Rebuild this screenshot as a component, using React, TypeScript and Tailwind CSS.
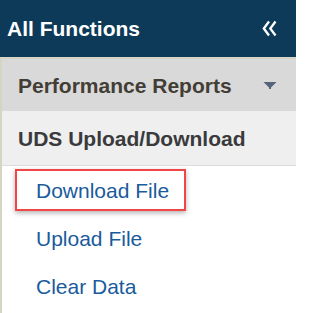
export default function App() {
  const font = { fontFamily: '"Liberation Sans", Arial, sans-serif' };
  return (
    <div className="w-[296px] h-[313px] bg-white overflow-hidden" style={font}>
      <div className="h-[57px] bg-[#0e3a59] flex items-center justify-between pl-[7px] pr-[19px]">
        <span className="text-white font-bold text-[21px] leading-none">All Functions</span>
        <svg width="15" height="17" viewBox="0 0 15 17" fill="none">
          <path d="M7 1.5 L1.8 8.5 L7 15.5" stroke="white" strokeWidth="2.3" strokeLinejoin="miter" />
          <path d="M13.5 1.5 L8.3 8.5 L13.5 15.5" stroke="white" strokeWidth="2.3" strokeLinejoin="miter" />
        </svg>
      </div>
      <div className="border-t-2 border-l-2 border-[#d6d4c5] h-[256px]">
        <div className="h-[52px] bg-[#d9d9d9] flex items-center justify-between pl-[16px] pr-[19px]">
          <span className="font-bold text-[21px] leading-none text-[#433e35]">Performance Reports</span>
          <svg width="14" height="8" viewBox="0 0 14 8">
            <path d="M0.5 1 H13.5 L8 6.5 V8 H6 V6.5 Z" fill="#56637a" />
          </svg>
        </div>
        <div className="h-[55px] bg-[#efefef] border-b border-[#dcdcdc] flex items-center pl-[16px]">
          <span className="font-bold text-[21px] leading-none text-[#3a3a3c]">UDS Upload/Download</span>
        </div>
        <div className="flex flex-col">
          <div className="h-[48px] flex items-center pl-[13px]">
            <div className="h-[42px] w-[171px] border-2 border-[#f24646] shadow-[0_2px_5px_rgba(0,0,0,0.3)] flex items-center pl-[19px]">
              <span className="text-[21px] leading-none text-[#1a5b9c]">Download File</span>
            </div>
          </div>
          <div className="h-[48px] flex items-center pl-[34px]">
            <span className="text-[21px] leading-none text-[#1a5b9c]">Upload File</span>
          </div>
          <div className="h-[48px] flex items-center pl-[34px]">
            <span className="text-[21px] leading-none text-[#1a5b9c]">Clear Data</span>
          </div>
        </div>
      </div>
    </div>
  );
}
